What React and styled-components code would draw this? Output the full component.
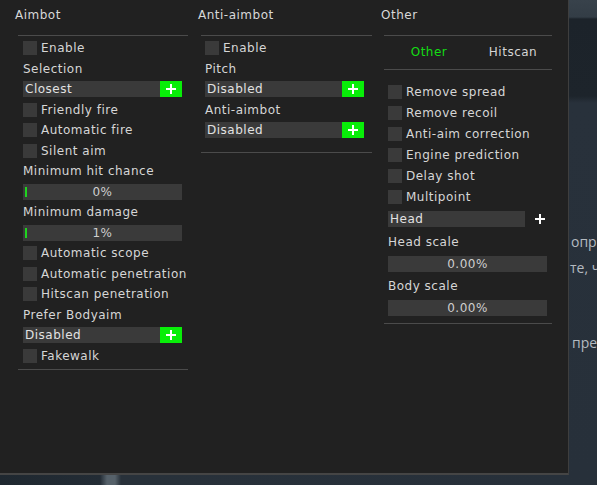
import React from 'react'
import styled, { createGlobalStyle } from 'styled-components'

const GlobalStyle = createGlobalStyle`
  html, body {
    margin: 0;
    padding: 0;
    background: #27303a;
  }
  body {
    font-family: "DejaVu Sans", "Liberation Sans", sans-serif;
    font-size: 12px;
    letter-spacing: 0.5px;
    color: #d6d6d6;
  }
`

const Screen = styled.div`
  display: grid;
  grid-template-columns: 569px 1fr;
  grid-template-rows: 475px 10px;
  width: 597px;
  height: 485px;
  overflow: hidden;
`

const Window = styled.div`
  box-sizing: border-box;
  display: flex;
  align-items: flex-start;
  padding-left: 15px;
  background: #212121;
  border-right: 1px solid #3e3e3e;
  border-bottom: 2px solid #454545;
`

const Backdrop = styled.div`
  overflow: hidden;
  padding-top: 229px;
  background: linear-gradient(
    to bottom,
    #38424b 0,
    #333d46 17px,
    #1c232a 19px,
    #1d242b 96px,
    #28313b 103px,
    #27303a 100%
  );
  font-family: "Open Sans", "DejaVu Sans", sans-serif;
  font-size: 14px;
  letter-spacing: 0;
  color: #b4bac0;
  white-space: nowrap;
`

const BackdropLine = styled.div`
  height: 26px;
  line-height: 26px;
  padding-left: ${p => p.$indent || 1}px;
  margin-top: ${p => p.$gap || 0}px;
`

const BottomStrip = styled.div`
  grid-column: 1 / span 2;
  background: linear-gradient(
    to right,
    #1f2830 0,
    #232c35 100px,
    #56616a 107px,
    #56616a 115px,
    #28313a 121px,
    #27303a 100%
  );
`

const Column = styled.div`
  width: 183px;
  display: flex;
  flex-direction: column;
`

const Header = styled.div`
  height: 35px;
  line-height: 30px;
  color: #d8d8d8;
`

const Group = styled.div`
  box-sizing: border-box;
  margin-left: 3px;
  width: ${p => p.$width}px;
  border-top: 1px solid #4b4b4b;
  border-bottom: 1px solid #4b4b4b;
  padding: ${p => p.$top ?? 2}px 0 ${p => p.$bottom}px ${p => p.$inset}px;
`

const TabBar = styled.div`
  display: flex;
  height: 33px;
  border-bottom: 1px solid #4b4b4b;
  margin-left: -4px;
  margin-bottom: 11px;
`

const Tab = styled.div`
  flex: 1;
  text-align: center;
  line-height: 33px;
  padding-left: ${p => (p.$active ? 6 : 6)}px;
  color: ${p => (p.$active ? '#14dc14' : '#d4d4d4')};
`

const Row = styled.div`
  height: ${p => p.$h || 20.5}px;
  display: flex;
  align-items: center;
  gap: 4px;
  white-space: nowrap;
`

const Box = styled.span`
  width: 14px;
  height: 14px;
  background: #3a3a3a;
  flex: none;
`

const Select = styled.div`
  box-sizing: border-box;
  width: ${p => p.$width}px;
  height: 16px;
  display: flex;
  align-items: center;
  background: #3a3a3a;
  color: #e2e2e2;
  padding-left: 2px;
`

const SelectText = styled.span`
  flex: 1;
`

const AddButton = styled.span`
  width: 22px;
  height: 16px;
  display: flex;
  align-items: center;
  justify-content: center;
  background: ${p => (p.$plain ? 'transparent' : '#08ee08')};
`

const Slider = styled.div`
  position: relative;
  width: ${p => p.$width}px;
  height: 16px;
  background: #3a3a3a;
  color: #cfcfcf;
  text-align: center;
  line-height: 16px;
`

const Fill = styled.span`
  position: absolute;
  left: 2px;
  top: 3px;
  width: 2px;
  height: 10px;
  background: #1fd41f;
`

const Plus = () => (
  <svg width="10" height="10" viewBox="0 0 10 10">
    <rect x="4" y="0" width="2" height="10" fill="#fff" />
    <rect x="0" y="4" width="10" height="2" fill="#fff" />
  </svg>
)

const Check = ({ label, h }) => (
  <Row $h={h}>
    <Box />
    <span>{label}</span>
  </Row>
)

const Label = ({ children, h }) => <Row $h={h}>{children}</Row>

const Dropdown = ({ value, width, plain, h }) => (
  <Row $h={h}>
    {plain ? (
      <>
        <Select $width={width}>
          <SelectText>{value}</SelectText>
        </Select>
        <AddButton $plain>
          <Plus />
        </AddButton>
      </>
    ) : (
      <Select $width={width} style={{ paddingRight: 0 }}>
        <SelectText>{value}</SelectText>
        <AddButton>
          <Plus />
        </AddButton>
      </Select>
    )}
  </Row>
)

const Range = ({ value, width, fill, h }) => (
  <Row $h={h}>
    <Slider $width={width}>
      {fill && <Fill />}
      {value}
    </Slider>
  </Row>
)

export default function App() {
  return (
    <>
      <GlobalStyle />
      <Screen>
        <Window>
          <Column>
            <Header>Aimbot</Header>
            <Group $width={170} $inset={5} $bottom={3}>
              <Check label="Enable" />
              <Label>Selection</Label>
              <Dropdown value="Closest" width={159} />
              <Check label="Friendly fire" />
              <Check label="Automatic fire" />
              <Check label="Silent aim" />
              <Label>Minimum hit chance</Label>
              <Range value="0%" width={159} fill />
              <Label>Minimum damage</Label>
              <Range value="1%" width={159} fill />
              <Check label="Automatic scope" />
              <Check label="Automatic penetration" />
              <Check label="Hitscan penetration" />
              <Label>Prefer Bodyaim</Label>
              <Dropdown value="Disabled" width={159} />
              <Check label="Fakewalk" />
            </Group>
          </Column>

          <Column>
            <Header>Anti-aimbot</Header>
            <Group $width={171} $inset={4} $bottom={11}>
              <Check label="Enable" />
              <Label>Pitch</Label>
              <Dropdown value="Disabled" width={159} />
              <Label>Anti-aimbot</Label>
              <Dropdown value="Disabled" width={159} />
            </Group>
          </Column>

          <Column>
            <Header>Other</Header>
            <Group $width={168} $inset={4} $top={0} $bottom={4}>
              <TabBar>
                <Tab $active>Other</Tab>
                <Tab>Hitscan</Tab>
              </TabBar>
              <Check label="Remove spread" h={21} />
              <Check label="Remove recoil" h={21} />
              <Check label="Anti-aim correction" h={21} />
              <Check label="Engine prediction" h={21} />
              <Check label="Delay shot" h={21} />
              <Check label="Multipoint" h={21} />
              <Dropdown value="Head" width={137} plain h={24} />
              <Label h={22}>Head scale</Label>
              <Range value="0.00%" width={159} h={22} />
              <Label h={22}>Body scale</Label>
              <Range value="0.00%" width={159} h={22} />
            </Group>
          </Column>
        </Window>

        <Backdrop>
          <BackdropLine $indent={2}>опр</BackdropLine>
          <BackdropLine>те, ч</BackdropLine>
          <BackdropLine $indent={3} $gap={49}>пре</BackdropLine>
        </Backdrop>

        <BottomStrip />
      </Screen>
    </>
  )
}
